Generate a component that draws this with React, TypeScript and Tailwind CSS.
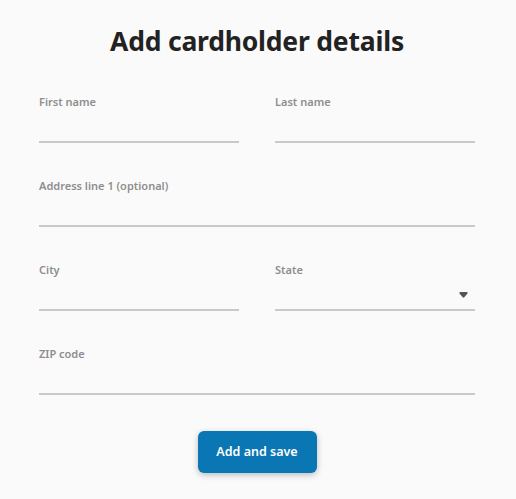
import React from "react";

function Field({ label, select = false }: { label: string; select?: boolean }) {
  return (
    <div className="flex flex-col">
      <label className="text-[11px] leading-4 font-semibold text-[#8e8e8e]">{label}</label>
      <div className="relative h-[33px] border-b-2 border-[#c9c9c9]">
        {select && (
          <svg
            className="absolute right-[7px] top-[14px]"
            width="9"
            height="6"
            viewBox="0 0 9 6"
          >
            <path d="M0.3 1.3 Q0.3 0 1.6 0 H7.4 Q8.7 0 8.7 1.3 L5.3 5.3 Q4.5 6 3.7 5.3 Z" fill="#555555" />
          </svg>
        )}
      </div>
    </div>
  );
}

export default function App() {
  return (
    <div
      className="min-h-[499px] w-full bg-[#fafafa] flex flex-col items-center pt-[21px] pr-[2px]"
      style={{ fontFamily: '"Noto Sans", "Open Sans", sans-serif' }}
    >
      <h1 className="text-[26.5px] leading-10 font-bold tracking-[-0.2px] text-[#222222]">Add cardholder details</h1>
      <div className="mt-[33px] w-[436px] grid grid-cols-2 gap-x-[36px] gap-y-[35px]">
        <Field label="First name" />
        <Field label="Last name" />
        <div className="col-span-2">
          <Field label="Address line 1 (optional)" />
        </div>
        <Field label="City" />
        <Field label="State" select />
        <div className="col-span-2">
          <Field label="ZIP code" />
        </div>
      </div>
      <button className="mt-[36px] w-[119px] h-[42px] rounded-[6px] bg-[#0a76b3] text-white text-[12.5px] font-semibold shadow-[0_2px_6px_rgba(0,0,0,0.25)]">
        Add and save
      </button>
    </div>
  );
}
